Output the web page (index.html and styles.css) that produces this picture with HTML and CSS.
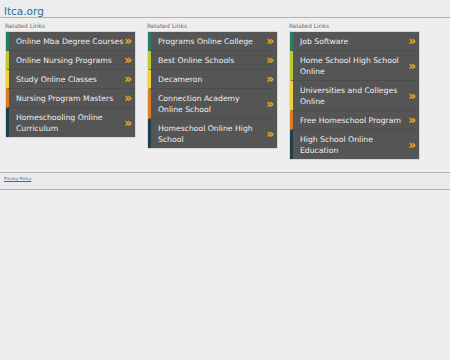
FILE: index.html
```html
<!DOCTYPE html>
<html lang="en">
<head>
    <meta charset="UTF-8">
    <meta name="viewport" content="width=device-width, initial-scale=1.0">
    <title>ltca.org</title>

    <link rel="stylesheet" href="styles.css">
</head>
<body>

    <div class="header">
        <a class="domain" href="#">ltca.org</a>
    </div>

    <div class="columns">
        <div class="col">
            <div class="label">Related Links</div>
            <ul class="links">
                <li class="c1"><a href="#">Online Mba Degree Courses</a><span class="arr">&raquo;</span></li>
                <li class="c2"><a href="#">Online Nursing Programs</a><span class="arr">&raquo;</span></li>
                <li class="c3"><a href="#">Study Online Classes</a><span class="arr">&raquo;</span></li>
                <li class="c4"><a href="#">Nursing Program Masters</a><span class="arr">&raquo;</span></li>
                <li class="c5"><a href="#">Homeschooling Online Curriculum</a><span class="arr">&raquo;</span></li>
            </ul>
        </div>
        <div class="col">
            <div class="label">Related Links</div>
            <ul class="links">
                <li class="c1"><a href="#">Programs Online College</a><span class="arr">&raquo;</span></li>
                <li class="c2"><a href="#">Best Online Schools</a><span class="arr">&raquo;</span></li>
                <li class="c3"><a href="#">Decameron</a><span class="arr">&raquo;</span></li>
                <li class="c4"><a href="#">Connection Academy Online School</a><span class="arr">&raquo;</span></li>
                <li class="c5"><a href="#">Homeschool Online High School</a><span class="arr">&raquo;</span></li>
            </ul>
        </div>
        <div class="col">
            <div class="label">Related Links</div>
            <ul class="links">
                <li class="c1"><a href="#">Job Software</a><span class="arr">&raquo;</span></li>
                <li class="c2"><a href="#">Home School High School Online</a><span class="arr">&raquo;</span></li>
                <li class="c3"><a href="#">Universities and Colleges Online</a><span class="arr">&raquo;</span></li>
                <li class="c4"><a href="#">Free Homeschool Program</a><span class="arr">&raquo;</span></li>
                <li class="c5"><a href="#">High School Online Education</a><span class="arr">&raquo;</span></li>
            </ul>
        </div>
    </div>

    <div class="footer">
        <a href="#">Privacy Policy</a>
    </div>

</body>
</html>
```

FILE: styles.css
```css
body {
    background-color: #eeeeee;
    font-family: "DejaVu Sans", Verdana, sans-serif;
    margin: 0;
}
.header {
    height: 17px;
    padding-left: 4px;
    border-bottom: 1px solid #a9b4ba;
    background-color: #ebeced;
}
.domain {
    font-size: 10.5px;
    line-height: 17px;
    color: #2c6e96;
    text-decoration: none;
}
.columns {
    display: flex;
    padding: 3px 0 0 5px;
    gap: 11px;
}
.col {
    width: 131px;
}
.label {
    font-size: 6px;
    color: #666;
    height: 10px;
    line-height: 10px;
}
.links {
    list-style: none;
    margin: 0;
    padding: 0;
    background-color: #555555;
    border: 1px solid #d8d8d8;
}
.links li {
    display: flex;
    align-items: center;
    border-left: 3px solid #2b7c68;
    border-bottom: 1px solid #4d4d4d;
    padding: 4px 3px 3px 7px;
}
.links li:last-child {
    border-bottom: none;
}
.links a {
    flex: 1;
    color: #f0f0f0;
    font-size: 7.7px;
    line-height: 11px;
    text-decoration: none;
}
.arr {
    flex-shrink: 0;
    width: 8px;
    text-align: right;
    color: #f2ad10;
    font-size: 12px;
    font-weight: bold;
    line-height: 11px;
}
.links li.c1 { border-left-color: #2b7c68; }
.links li.c2 { border-left-color: #b8cc30; }
.links li.c3 { border-left-color: #f2d235; }
.links li.c4 { border-left-color: #dd7a26; }
.links li.c5 { border-left-color: #1c4048; }
.footer {
    margin-top: 12px;
    border-top: 1px solid #a9b4ba;
    border-bottom: 1px solid #a9b4ba;
    height: 18px;
    padding: 3px 0 0 4px;
    box-sizing: border-box;
    background-color: #e9eaeb;
    font-size: 4px;
    line-height: 6px;
}
.footer a {
    color: #2c6e96;
}
```
